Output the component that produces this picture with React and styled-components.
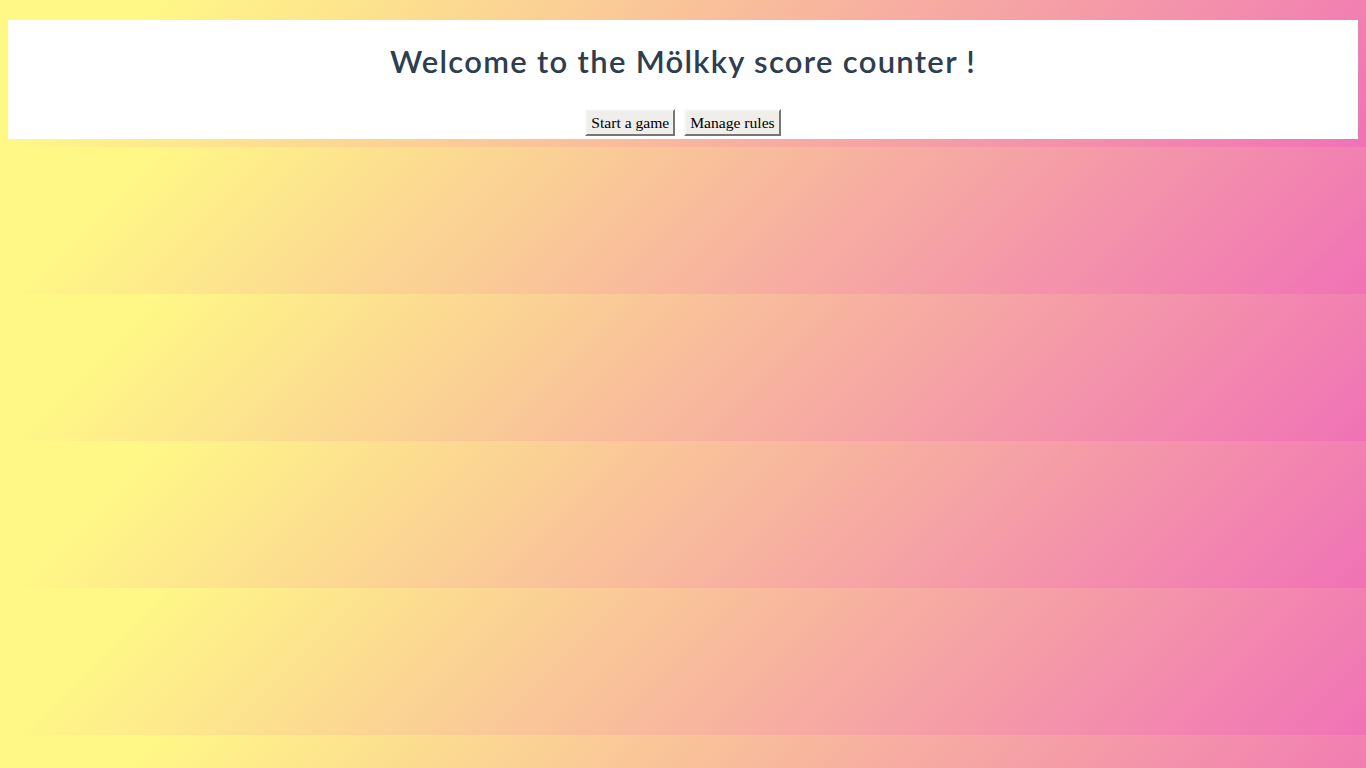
import React from 'react';
import styled, { createGlobalStyle } from 'styled-components';

const GlobalStyle = createGlobalStyle`
  body {
    margin: 8px;
    background-image: linear-gradient(135deg, #fff886 10%, #f072b6 100%);
    font-family: "Liberation Serif", serif;
  }
`;

const Header = styled.header`
  margin-top: 12px;
  padding: 21px 0 3px;
  background: #ffffff;
  text-align: center;
  color: #2c3e50;
`;

const Title = styled.h1`
  margin: 0 0 28px;
  font-family: Lato, "Noto Sans", sans-serif;
  font-size: 31px;
  font-weight: 600;
  letter-spacing: 1.3px;
  line-height: 40px;
`;

const Actions = styled.div`
  display: flex;
  justify-content: center;
  gap: 9px;
`;

const Button = styled.button`
  padding: 1px 4px;
  border-width: 2px;
  border-style: solid;
  border-color: #f7f7f7 #767676 #767676 #f7f7f7;
  background: #efeeeb;
  color: #000000;
  font-family: "Liberation Serif", serif;
  font-size: 15.6px;
  line-height: 21px;
  cursor: pointer;
`;

export default function App() {
  return (
    <>
      <GlobalStyle />
      <Header>
        <Title>Welcome to the Mölkky score counter !</Title>
        <Actions>
          <Button>Start a game</Button>
          <Button>Manage rules</Button>
        </Actions>
      </Header>
    </>
  );
}
